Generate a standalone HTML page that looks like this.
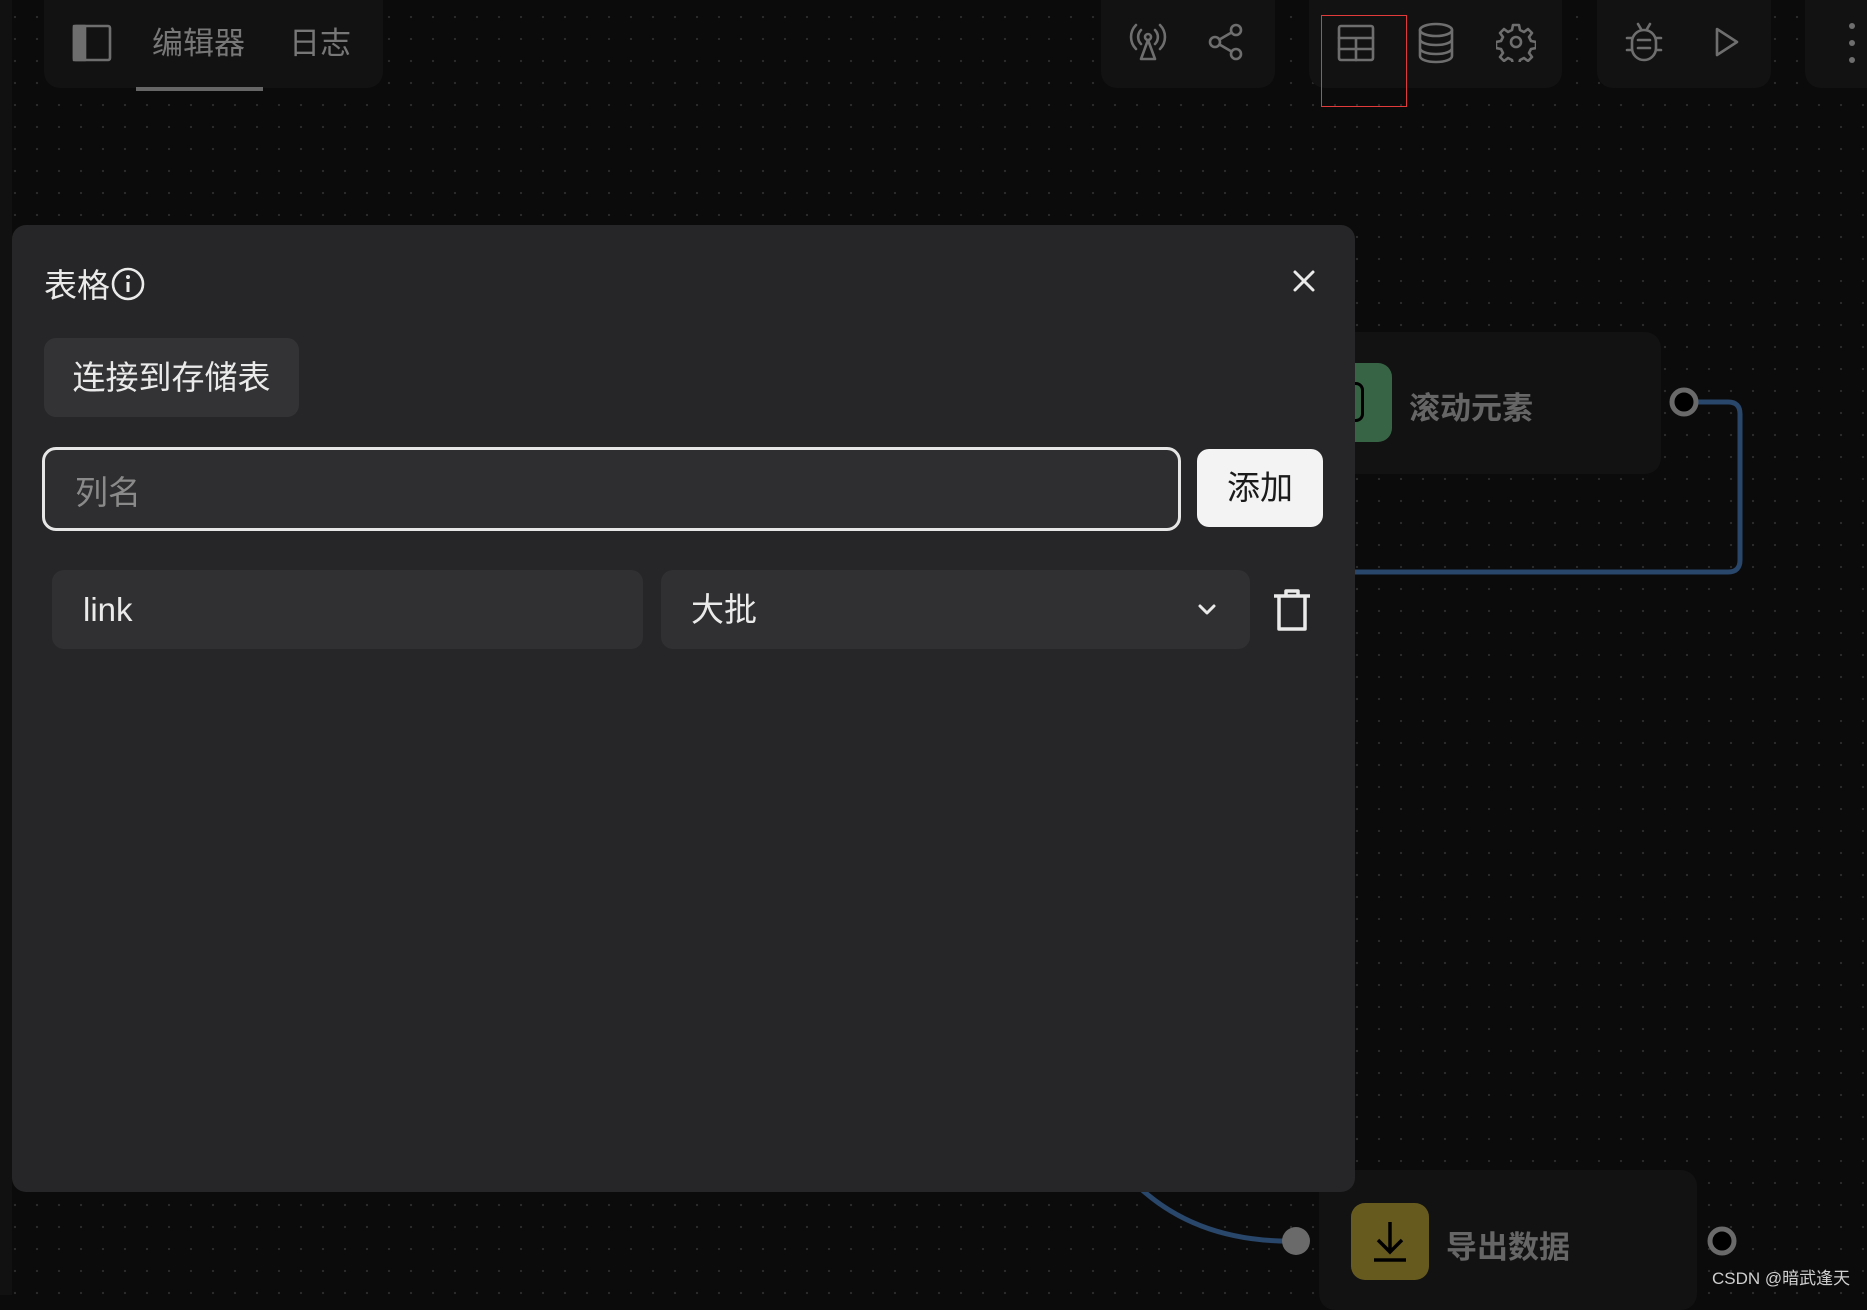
<!DOCTYPE html>
<html><head><meta charset="utf-8"><style>
*{margin:0;padding:0;box-sizing:border-box}
body{width:1867px;height:1295px;overflow:hidden;background:#0b0b0b;position:relative;font-family:"Liberation Sans","Noto Sans CJK SC",sans-serif;
background-image:radial-gradient(circle,#2c2c2c 1px,transparent 1.3px);background-size:22px 22px;background-position:4px 6px}
.abs{position:absolute}
.grp{position:absolute;top:0;height:88px;background:#121212;border-radius:0 0 16px 16px}
.ic{position:absolute;stroke:#6e6e6e;fill:none;stroke-width:2.6;stroke-linecap:round;stroke-linejoin:round}
.panel{left:12px;top:225px;width:1343px;height:967px;background:#262628;border-radius:14px}
.t{color:#eaeaea}
</style></head><body>
<div class="abs" style="left:0;top:0;width:12px;height:1295px;background:#111"></div>
<div class="grp" style="left:44px;width:339px"></div>
<svg class="ic" style="left:72px;top:24px" width="40" height="38" viewBox="0 0 40 38"><rect x="2" y="2" width="36" height="34" rx="2"/><rect x="2" y="2" width="11" height="34" fill="#6e6e6e"/></svg>
<div class="abs" style="left:152px;top:18px;font-size:31px;color:#777">编辑器</div>
<div class="abs" style="left:289px;top:18px;font-size:31px;color:#777">日志</div>
<div class="abs" style="left:136px;top:87px;width:127px;height:4px;background:#666"></div>
<div class="grp" style="left:1101px;width:174px"></div>
<div class="grp" style="left:1309px;width:253px"></div>
<div class="grp" style="left:1597px;width:174px"></div>
<div class="grp" style="left:1805px;width:80px"></div>
<svg class="ic" style="left:1128px;top:22px" width="40" height="40" viewBox="0 0 40 40"><circle cx="20" cy="15" r="3"/><path d="M13 8a10 10 0 0 0 0 14M27 8a10 10 0 0 1 0 14M8 3a17 17 0 0 0 0 24M32 3a17 17 0 0 1 0 24M20 18l-7 19h14z"/></svg>
<svg class="ic" style="left:1206px;top:22px" width="40" height="40" viewBox="0 0 40 40"><circle cx="30" cy="8" r="5"/><circle cx="9" cy="20" r="5"/><circle cx="30" cy="32" r="5"/><path d="M13.5 17.5l12-7M13.5 22.5l12 7"/></svg>
<svg class="ic" style="left:1337px;top:24px" width="38" height="38" viewBox="0 0 38 38"><rect x="2" y="2" width="34" height="34" rx="2"/><path d="M2 14h34M2 25h34M19 14v22"/></svg>
<svg class="ic" style="left:1416px;top:22px" width="40" height="42" viewBox="0 0 40 42"><ellipse cx="20" cy="8" rx="16" ry="6"/><path d="M4 8v26c0 3.5 7 6 16 6s16-2.5 16-6V8M4 17c0 3.5 7 6 16 6s16-2.5 16-6M4 26c0 3.5 7 6 16 6s16-2.5 16-6"/></svg>
<svg class="ic" style="left:1496px;top:22px" width="40" height="40" viewBox="0 0 40 40"><circle cx="20" cy="20" r="5"/><path d="M17 3h6l1 5 4 2 4-3 4 4-3 4 2 4 5 1v6l-5 1-2 4 3 4-4 4-4-3-4 2-1 5h-6l-1-5-4-2-4 3-4-4 3-4-2-4-5-1v-6l5-1 2-4-3-4 4-4 4 3 4-2z"/></svg>
<svg class="ic" style="left:1624px;top:20px" width="40" height="44" viewBox="0 0 40 44"><rect x="8" y="10" width="24" height="30" rx="12"/><path d="M14 4l3 5M26 4l-3 5M3 18h5M32 18h5M3 30h5M32 30h5M14 20h12M14 28h12"/></svg>
<svg class="ic" style="left:1712px;top:26px" width="30" height="32" viewBox="0 0 30 32"><path d="M5 3l20 13L5 29z"/></svg>
<svg class="abs" style="left:1846px;top:22px" width="12" height="42"><circle cx="6" cy="4" r="3" fill="#6e6e6e"/><circle cx="6" cy="21" r="3" fill="#6e6e6e"/><circle cx="6" cy="38" r="3" fill="#6e6e6e"/></svg>
<div class="abs" style="left:1321px;top:15px;width:86px;height:92px;border:1.5px solid #e23a3a"></div>
<svg class="abs" style="left:0;top:0" width="1867" height="1295"><path d="M1697 402H1728q12 0 12 12V560q0 12-12 12H1300" stroke="#29466b" stroke-width="5" fill="none"/><path d="M1140 1188q60 55 156 53" stroke="#29466b" stroke-width="5" fill="none"/></svg>
<div class="abs" style="left:1300px;top:332px;width:361px;height:142px;background:#121212;border-radius:16px"></div>
<div class="abs" style="left:1300px;top:363px;width:92px;height:79px;background:#386446;border-radius:14px"></div>
<div class="abs" style="left:1340px;top:382px;width:24px;height:40px;border:3px solid #000;border-radius:8px"></div>
<div class="abs" style="left:1409px;top:383px;font-size:31px;font-weight:bold;color:#666">滚动元素</div>
<svg class="abs" style="left:1668px;top:386px" width="32" height="32"><circle cx="16" cy="16" r="12" fill="#000" stroke="#6a6a6a" stroke-width="5"/></svg>
<div class="abs" style="left:1319px;top:1170px;width:378px;height:140px;background:#121212;border-radius:16px"></div>
<div class="abs" style="left:1351px;top:1203px;width:78px;height:77px;background:#665a1f;border-radius:14px"></div>
<svg class="abs" style="left:1366px;top:1218px" width="48" height="48" viewBox="0 0 48 48"><path d="M24 4v30M12 22l12 12 12-12M8 42h32" stroke="#000" stroke-width="3.5" fill="none"/></svg>
<div class="abs" style="left:1446px;top:1222px;font-size:31px;font-weight:bold;color:#666">导出数据</div>
<svg class="abs" style="left:1280px;top:1225px" width="32" height="32"><circle cx="16" cy="16" r="14" fill="#6a6a6a"/></svg>
<svg class="abs" style="left:1706px;top:1225px" width="32" height="32"><circle cx="16" cy="16" r="12" fill="#000" stroke="#6a6a6a" stroke-width="5"/></svg>
<div class="abs" style="left:1712px;top:1264px;font-size:17px;color:#cfcfcf">CSDN @暗武逢天</div>
<div class="abs panel"></div>
<div class="abs t" style="left:44px;top:259px;font-size:33px">表格</div>
<svg class="abs" style="left:110px;top:266px" width="36" height="36" viewBox="0 0 36 36"><circle cx="18" cy="18" r="15" stroke="#eaeaea" stroke-width="2.6" fill="none"/><path d="M18 16v10" stroke="#eaeaea" stroke-width="3"/><circle cx="18" cy="11" r="2" fill="#eaeaea"/></svg>
<svg class="abs" style="left:1292px;top:269px" width="24" height="24" viewBox="0 0 24 24"><path d="M3 3l18 18M21 3L3 21" stroke="#eaeaea" stroke-width="3" stroke-linecap="round"/></svg>
<div class="abs t" style="left:44px;top:338px;width:255px;height:79px;background:#333335;border-radius:12px;font-size:33px;line-height:79px;text-align:center">连接到存储表</div>
<div class="abs" style="left:42px;top:447px;width:1139px;height:84px;border:3px solid #e6e6e6;border-radius:14px;background:#2e2e30"></div>
<div class="abs" style="left:75px;top:466px;font-size:33px;color:#8a8a8a">列名</div>
<div class="abs" style="left:1197px;top:449px;width:126px;height:78px;background:#f3f3f3;border-radius:12px;font-size:33px;line-height:78px;text-align:center;color:#1a1a1a">添加</div>
<div class="abs t" style="left:52px;top:570px;width:591px;height:79px;background:#303032;border-radius:12px;font-size:33px;line-height:79px;padding-left:31px">link</div>
<div class="abs t" style="left:661px;top:570px;width:589px;height:79px;background:#303032;border-radius:12px;font-size:33px;line-height:79px;padding-left:30px">大批</div>
<svg class="abs" style="left:1196px;top:600px" width="22" height="20" viewBox="0 0 22 20"><path d="M4 6l7 7 7-7" stroke="#eaeaea" stroke-width="3" fill="none" stroke-linecap="round" stroke-linejoin="round"/></svg>
<svg class="abs" style="left:1272px;top:588px" width="40" height="44" viewBox="0 0 40 44"><path d="M2 8h36M14 8V3h12v5M7 8v33h26V8" stroke="#eaeaea" stroke-width="3.5" fill="none" stroke-linejoin="round"/></svg>
</body></html>
